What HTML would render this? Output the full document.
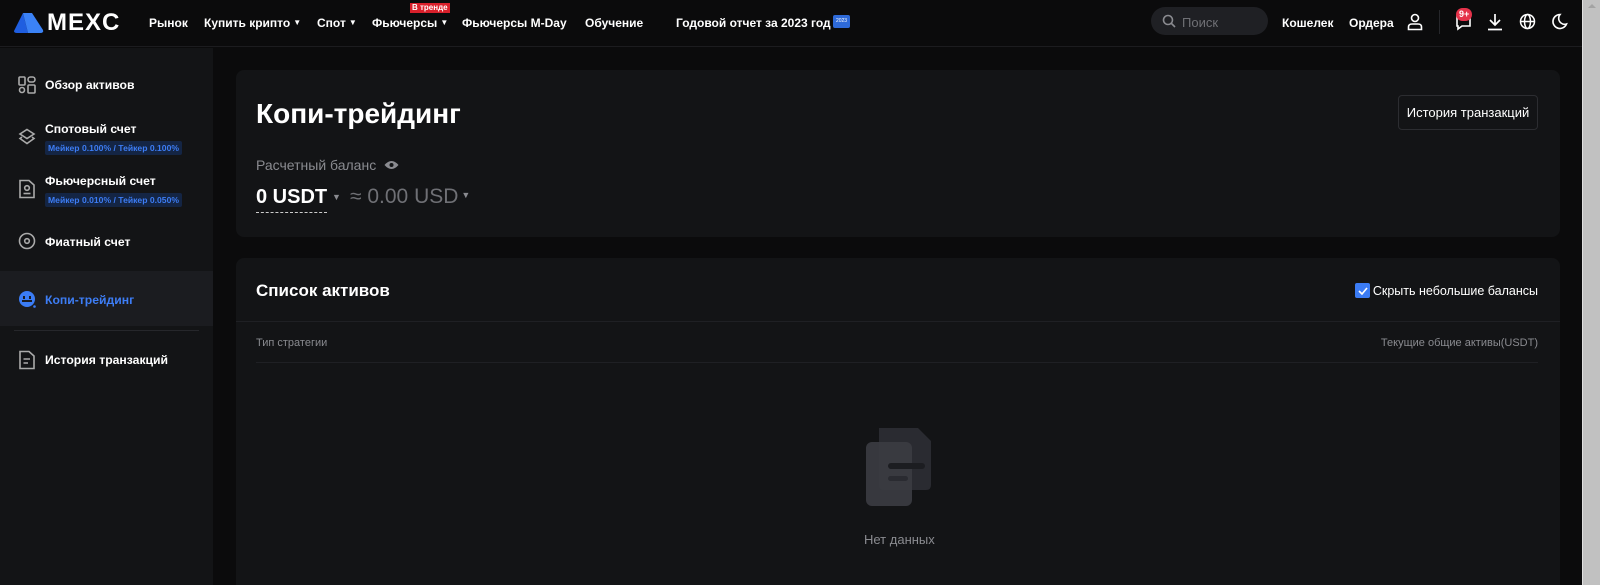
<!DOCTYPE html>
<html style="overflow:hidden;height:585px"><head><meta charset="utf-8"><style>
*{margin:0;padding:0;box-sizing:border-box}
body{width:1600px;height:585px;overflow:hidden;background:#0b0b0c;font-family:"Liberation Sans","Noto Sans CJK SC",sans-serif;color:#fff;position:relative}
.hdr{position:absolute;left:0;top:0;width:1582px;height:47px;background:#0b0b0c;border-bottom:1px solid #1c1c1f}
.t{position:absolute;white-space:nowrap}
.nav{font-size:12px;font-weight:bold;top:16px;color:#fff}
.car{font-size:8px;vertical-align:2px;margin-left:3px}
.side{position:absolute;left:0;top:48px;width:213px;height:537px;background:#131416}
.si{position:absolute;left:45px;font-size:12.2px;font-weight:bold;color:#fff}
.tag{position:absolute;left:45px;font-size:8.6px;font-weight:bold;color:#3d7df5;background:#142544;padding:2px 3px;border-radius:2px}
.ic{position:absolute;left:18px}
.card{position:absolute;left:236px;width:1324px;background:#131416;border-radius:8px}
.sb{position:absolute;left:1582px;top:0;width:18px;height:585px;background:#c1c1c1;border-left:1px solid #e0e0e0}
</style></head><body>
<div class="hdr">
<svg class="t" style="left:14px;top:13px" width="30" height="20" viewBox="0 0 30 20"><path d="M9 0 L0 18 Q0 20 3 20 L14 20 Z" fill="#1f5ee0"/><path d="M9 0 L18 0 L29 17 Q30 20 26 20 L14 20 Z" fill="#3b82f6"/></svg>
<div class="t" style="left:47px;top:9px;font-size:24px;font-weight:bold;letter-spacing:1px">MEXC</div>
<div class="t nav" style="left:149px">Рынок</div>
<div class="t nav" style="left:204px">Купить крипто<span class="car">▼</span></div>
<div class="t nav" style="left:317px">Спот<span class="car">▼</span></div>
<div class="t nav" style="left:372px">Фьючерсы<span class="car">▼</span></div>
<div class="t" style="left:410px;top:3px;background:#d9202b;font-size:8px;font-weight:bold;padding:0 2px;line-height:10px">В тренде</div>
<div class="t nav" style="left:462px">Фьючерсы M-Day</div>
<div class="t nav" style="left:585px">Обучение</div>
<div class="t nav" style="left:676px">Годовой отчет за 2023 год</div>
<div class="t" style="left:833px;top:15px;width:17px;height:13px;background:#2e6ad9;border-radius:2px;font-size:5px;text-align:center;line-height:13px">2023</div>
<div class="t" style="left:1151px;top:7px;width:117px;height:28px;background:#1f2024;border-radius:14px"></div>
<svg class="t" style="left:1162px;top:14px" width="14" height="14" viewBox="0 0 14 14"><circle cx="6" cy="6" r="4.5" stroke="#8a8b90" stroke-width="1.6" fill="none"/><path d="M9.5 9.5 L13 13" stroke="#8a8b90" stroke-width="1.6"/></svg>
<div class="t" style="left:1182px;top:15px;font-size:13px;color:#6f7075">Поиск</div>
<div class="t nav" style="left:1282px">Кошелек</div>
<div class="t nav" style="left:1349px">Ордера</div>
<svg class="t" style="left:1407px;top:13px" width="16" height="18" viewBox="0 0 16 18" fill="none" stroke="#fff" stroke-width="1.6"><circle cx="8" cy="5" r="3.5"/><path d="M1.5 16.5 V14 Q1.5 11 5 11 H11 Q14.5 11 14.5 14 V16.5 Z"/></svg>
<div class="t" style="left:1439px;top:10px;width:1px;height:24px;background:#26272b"></div>
<svg class="t" style="left:1455px;top:14px" width="18" height="17" viewBox="0 0 18 17" fill="none" stroke="#fff" stroke-width="1.6"><path d="M2 2 H15 V12 H7 L3 15 V12 H2 Z"/></svg>
<div class="t" style="left:1456px;top:8px;background:#e5324a;border-radius:8px;font-size:9px;font-weight:bold;padding:1px 3px;line-height:11px">9+</div>
<svg class="t" style="left:1487px;top:13px" width="16" height="18" viewBox="0 0 16 18" fill="none" stroke="#fff" stroke-width="1.7"><path d="M8 1 V12 M3 7 L8 12 L13 7 M1 16.5 H15"/></svg>
<svg class="t" style="left:1519px;top:13px" width="17" height="17" viewBox="0 0 17 17" fill="none" stroke="#fff" stroke-width="1.5"><circle cx="8.5" cy="8.5" r="7"/><ellipse cx="8.5" cy="8.5" rx="3" ry="7"/><path d="M1.5 8.5 H15.5"/></svg>
<svg class="t" style="left:1551px;top:13px" width="17" height="17" viewBox="0 0 17 17" fill="none" stroke="#fff" stroke-width="1.6"><path d="M9 1.5 A7 7 0 1 0 15.5 11 A6 6 0 0 1 9 1.5 Z"/></svg>
</div>
<div class="side">
<svg class="ic" style="top:28px" width="18" height="18" viewBox="0 0 18 18" fill="none" stroke="#aaa" stroke-width="1.6"><rect x="1" y="1" width="6" height="8" rx="1"/><rect x="10" y="1" width="7" height="5" rx="2.5"/><circle cx="4" cy="14" r="2.5"/><rect x="10" y="9" width="7" height="8" rx="1"/></svg>
<div class="si" style="top:30px">Обзор активов</div>
<svg class="ic" style="top:80px" width="18" height="18" viewBox="0 0 18 18" fill="none" stroke="#aaa" stroke-width="1.6"><path d="M9 1.5 L16 6 L9 10.5 L2 6 Z M4 9 L2 10.5 L9 15.5 L16 10.5 L14 9"/></svg>
<div class="si" style="top:74px">Спотовый счет</div>
<div class="tag" style="top:93px">Мейкер 0.100% / Тейкер 0.100%</div>
<svg class="ic" style="top:131px" width="18" height="20" viewBox="0 0 18 20" fill="none" stroke="#aaa" stroke-width="1.6"><path d="M2 1.5 H11 L16 6 V18.5 H2 Z"/><circle cx="9" cy="9" r="2.3"/><path d="M5.5 14.5 H12.5"/></svg>
<div class="si" style="top:126px">Фьючерсный счет</div>
<div class="tag" style="top:145px">Мейкер 0.010% / Тейкер 0.050%</div>
<svg class="ic" style="top:184px" width="18" height="18" viewBox="0 0 18 18" fill="none" stroke="#aaa" stroke-width="1.6"><circle cx="9" cy="9" r="7.5"/><circle cx="9" cy="9" r="2.3"/></svg>
<div class="si" style="top:187px">Фиатный счет</div>
<div style="position:absolute;left:0;top:223px;width:213px;height:55px;background:#1b1c20"></div>
<svg class="ic" style="top:242px" width="19" height="19" viewBox="0 0 19 19"><circle cx="9" cy="9" r="8" fill="#3b7cf5"/><rect x="5" y="6" width="2" height="3" fill="#1b1c20"/><rect x="11" y="6" width="2" height="3" fill="#1b1c20"/><rect x="4" y="10" width="10" height="2" fill="#1b1c20"/><circle cx="16.5" cy="16.5" r="1.3" fill="#3b7cf5"/></svg>
<div class="si" style="top:245px;color:#3d7df5">Копи-трейдинг</div>
<div style="position:absolute;left:14px;top:282px;width:185px;height:1px;background:#26272b"></div>
<svg class="ic" style="top:302px" width="18" height="20" viewBox="0 0 18 20" fill="none" stroke="#aaa" stroke-width="1.6"><path d="M2 1.5 H11 L16 6 V18.5 H2 Z"/><path d="M5.5 9 H12 M5.5 13 H10"/></svg>
<div class="si" style="top:305px">История транзакций</div>
</div>
<div class="card" style="top:70px;height:167px">
<div class="t" style="left:20px;top:28px;font-size:28px;font-weight:bold">Копи-трейдинг</div>
<div class="t" style="left:1162px;top:25px;width:140px;height:35px;border:1px solid #2c2d31;border-radius:4px;font-size:13px;text-align:center;line-height:33px">История транзакций</div>
<div class="t" style="left:20px;top:87px;font-size:14px;color:#8a8b90">Расчетный баланс</div>
<svg class="t" style="left:148px;top:89px" width="15" height="12" viewBox="0 0 15 12"><path d="M0.5 6 Q7.5 -2 14.5 6 Q7.5 14 0.5 6 Z" fill="#8a8b90"/><circle cx="7.5" cy="6" r="2" fill="#131416"/></svg>
<div class="t" style="left:20px;top:116px;font-size:20px;font-weight:bold;border-bottom:1px dashed #ccc;padding-bottom:3px">0 USDT</div>
<div class="t" style="left:96px;top:122px;font-size:9px;color:#8a8b90">▼</div>
<div class="t" style="left:114px;top:115px;font-size:21px;color:#6f7075">≈ 0.00 USD<span style="font-size:9px;vertical-align:5px;margin-left:3px;color:#8a8b90">▼</span></div>
</div>
<div class="card" style="top:258px;height:327px;border-radius:8px 8px 0 0">
<div class="t" style="left:20px;top:23px;font-size:17px;font-weight:bold">Список активов</div>
<div class="t" style="left:1119px;top:25px;width:15px;height:15px;background:#3b7cf5;border-radius:2px"></div>
<svg class="t" style="left:1122px;top:29px" width="10" height="8" viewBox="0 0 10 8"><path d="M1 4 L4 7 L9 1" stroke="#fff" stroke-width="1.6" fill="none"/></svg>
<div class="t" style="right:22px;top:26px;font-size:12.5px">Скрыть небольшие балансы</div>
<div style="position:absolute;left:0;top:63px;width:1324px;height:1px;background:#1f2024"></div>
<div class="t" style="left:20px;top:79px;font-size:11px;color:#8a8b90">Тип стратегии</div>
<div class="t" style="right:22px;top:79px;font-size:11px;color:#8a8b90">Текущие общие активы(USDT)</div>
<div style="position:absolute;left:20px;top:104px;width:1282px;height:1px;background:#1f2024"></div>
<svg class="t" style="left:630px;top:170px" width="66" height="80" viewBox="0 0 66 80"><path d="M13 0 H52 L65 13 V57 Q65 62 60 62 H18 Q13 62 13 57 Z" fill="#2a2b31"/><rect x="0" y="14" width="46" height="64" rx="6" fill="#3a3b42" opacity="0.93"/><rect x="22" y="35" width="37" height="6" rx="3" fill="#1c1d21"/><rect x="22" y="48" width="20" height="5" rx="2.5" fill="#2a2b31"/></svg>
<div class="t" style="left:628px;top:274px;font-size:13px;color:#8a8b90">Нет данных</div>
</div>
<div class="sb"><div style="margin:4px auto 0;width:0;height:0;border-left:4px solid transparent;border-right:4px solid transparent;border-bottom:4px solid #a3a3a3"></div></div>
</body></html>
